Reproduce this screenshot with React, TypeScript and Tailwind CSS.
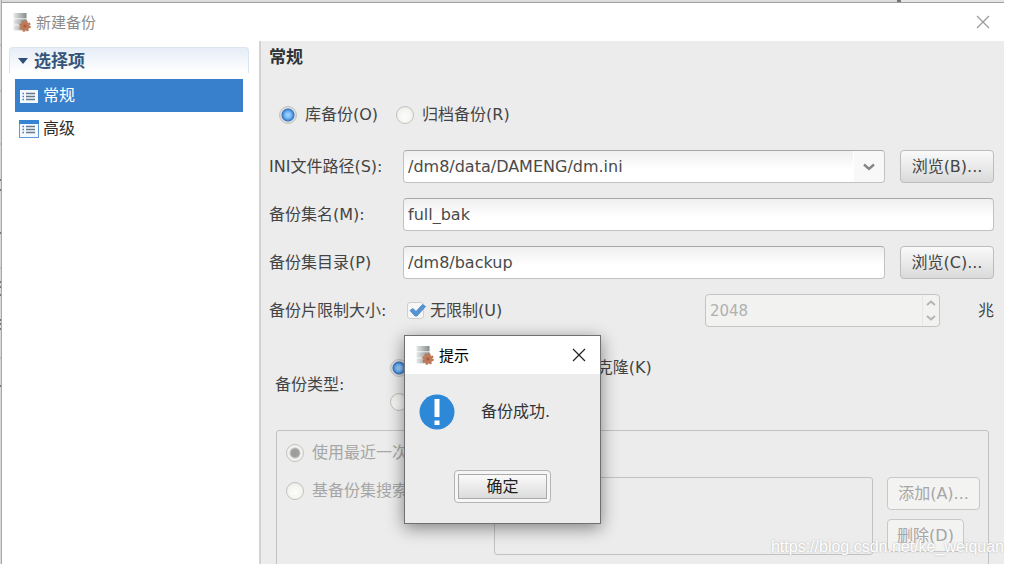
import React from 'react';
import { clsx } from 'clsx';

const FONT = "font-['DejaVu_Sans','Noto_Sans_CJK_SC',sans-serif]";
const UI_FONT = "font-['Noto_Sans_CJK_SC',sans-serif]";

function AppIcon() {
  return (
    <svg viewBox="0 0 20 20" className="h-5 w-5 shrink-0" aria-hidden="true">
      <defs>
        <linearGradient id="server" x1="0" x2="1">
          <stop offset="0" stopColor="#e6e9e8" />
          <stop offset="1" stopColor="#848c8b" />
        </linearGradient>
      </defs>
      <rect x="1.5" y="1" width="13" height="5.4" fill="url(#server)" />
      <rect x="1.5" y="7.2" width="13" height="5.4" fill="url(#server)" />
      <rect x="1.5" y="13.4" width="13" height="5" fill="url(#server)" />
      <circle cx="13" cy="14" r="4.9" fill="none" stroke="#b97350" strokeWidth="1.8" strokeDasharray="2.2 1.6" />
      <circle cx="13" cy="14" r="4.6" fill="#be7a5a" />
      <circle cx="13" cy="14" r="1.6" fill="#a85c40" />
    </svg>
  );
}

function CloseIcon({ className }: { className?: string }) {
  return (
    <svg viewBox="0 0 14 14" className={clsx('h-3.5 w-3.5', className)} aria-hidden="true">
      <path d="M1 1 L13 13 M13 1 L1 13" stroke="currentColor" strokeWidth="1.2" fill="none" />
    </svg>
  );
}

function ListIcon({ active }: { active?: boolean }) {
  return (
    <svg viewBox="0 0 20 18" className="h-[18px] w-5 shrink-0" aria-hidden="true">
      {active ? (
        <rect x="1" y="3" width="18" height="13" fill="#f4f9ff" />
      ) : (
        <>
          <rect x="0.5" y="0.5" width="19" height="17" fill="#f4f9ff" stroke="#5b9bdc" />
          <rect x="0" y="0" width="20" height="4" fill="#3584d4" />
        </>
      )}
      <path d="M3.5 6.5h1.5M3.5 9.5h1.5M3.5 12.5h1.5" stroke="#3f7fc2" strokeWidth="1.4" />
      <path d="M7 6.5h9M7 9.5h9M7 12.5h9" stroke="#66788a" strokeWidth="1.4" />
    </svg>
  );
}

interface RadioProps {
  name: string;
  label: string;
  checked?: boolean;
  disabled?: boolean;
  className?: string;
}

function Radio({ name, label, checked, disabled, className }: RadioProps) {
  return (
    <label className={clsx('flex items-center gap-2 whitespace-nowrap', disabled && 'text-[#a6a6a6]', className)}>
      <input
        type="radio"
        name={name}
        defaultChecked={checked}
        disabled={disabled}
        className="h-[18px] w-[18px] shrink-0 appearance-none rounded-full border border-[#c2c2be] bg-[radial-gradient(circle_at_50%_60%,#fdfdfc_0%,#f3f3f0_60%,#dcdcd8_100%)] enabled:checked:bg-[radial-gradient(circle,#a4d4ff_0px,#7dbcf8_3px,#4a90dc_5px,#3a74b8_6px,#e0e2e4_7px,#d2d4d6_9px)] disabled:checked:bg-[radial-gradient(circle,#9b9b9b_0px,#a0a0a0_4px,#f2f2f0_6px)]"
      />
      {label}
    </label>
  );
}

interface ButtonProps {
  children: React.ReactNode;
  disabled?: boolean;
  className?: string;
}

function Button({ children, disabled, className }: ButtonProps) {
  return (
    <button
      type="button"
      disabled={disabled}
      className={clsx(
        'h-[33px] rounded-[4px] border border-[#bcbcbc] bg-linear-to-b from-[#fafafa] to-[#dadada] px-1.5 whitespace-nowrap disabled:border-[#c8c8c8] disabled:from-[#f3f3f2] disabled:to-[#f3f3f2] disabled:text-[#a6a6a6]',
        className,
      )}
    >
      {children}
    </button>
  );
}

const fieldClass =
  'h-[33px] w-full min-w-0 appearance-none rounded-[4px] border border-[#c2c2c2] border-t-[#a9a9a9] bg-linear-to-b from-[#efefef] to-white to-60% px-1 text-[#4a4a4a] outline-none';

function Sidebar() {
  return (
    <nav className="w-[258px] shrink-0 border-r-2 border-[#d2d2d2] bg-white pt-1.5 pr-2.5 pl-1.5 text-[#2d2d2d]">
      <button
        type="button"
        className="flex h-[26px] w-full items-center gap-1.5 rounded-t-[4px] border border-b-0 border-[#dbe4f0] bg-linear-to-b from-[#e6edf7] to-white px-2 text-[17px] font-bold text-[#35557a]"
      >
        <svg viewBox="0 0 10 6" className="h-1.5 w-2.5" aria-hidden="true">
          <path d="M0 0H10L5 6Z" fill="#2d5078" />
        </svg>
        选择项
      </button>
      <ul className="mx-1.5 mt-1.5">
        <li>
          <a href="#general" className="flex h-[33px] items-center gap-1 bg-[#3980cc] px-1 text-white">
            <ListIcon active />
            常规
          </a>
        </li>
        <li>
          <a href="#advanced" className="flex h-[33px] items-center gap-1 px-1">
            <ListIcon />
            高级
          </a>
        </li>
      </ul>
    </nav>
  );
}

function GeneralForm() {
  return (
    <main className="min-w-0 flex-1 bg-[#ececec] text-[#444]">
      <h1 className="flex h-8 items-center pl-2 text-[17px] font-bold text-[#2e3436]">常规</h1>

      <div className="mt-[26px] flex h-8 items-center gap-[18px] pl-[18px]">
        <Radio name="scope" label="库备份(O)" checked />
        <Radio name="scope" label="归档备份(R)" />
      </div>

      <div className="mt-[19px] grid grid-cols-[134px_1fr_94px] items-center gap-y-[15px] pr-2.5 pl-2">
        <label htmlFor="ini">INI文件路径(S):</label>
        <div className="relative mr-[15px]">
          <select id="ini" className={fieldClass}>
            <option>/dm8/data/DAMENG/dm.ini</option>
          </select>
          <span className="pointer-events-none absolute inset-y-px right-px flex w-[31px] items-center justify-center rounded-r-[4px] border-l border-white bg-[#f8f8f8]">
            <svg viewBox="0 0 12 8" className="h-2 w-3" aria-hidden="true">
              <path d="M1 1.5L6 6L11 1.5" fill="none" stroke="#858585" strokeWidth="2.4" />
            </svg>
          </span>
        </div>
        <Button>浏览(B)...</Button>

        <label htmlFor="set-name">备份集名(M):</label>
        <div className="col-span-2">
          <input id="set-name" type="text" defaultValue="full_bak" className={fieldClass} />
        </div>

        <label htmlFor="set-dir">备份集目录(P)</label>
        <div className="mr-[15px]">
          <input id="set-dir" type="text" defaultValue="/dm8/backup" className={fieldClass} />
        </div>
        <Button>浏览(C)...</Button>

        <label htmlFor="piece-size">备份片限制大小:</label>
        <div className="col-span-2 flex items-center">
          <label className="flex items-center gap-1.5 pl-1">
            <span className="relative flex">
              <input
                type="checkbox"
                defaultChecked
                className="h-[17px] w-[17px] appearance-none rounded-[3px] border border-[#cdcfd1] bg-[#f6f6f6]"
              />
              <svg viewBox="0 0 20 18" className="pointer-events-none absolute inset-0 h-[18px] w-5" aria-hidden="true">
                <path d="M3 8.5L6 6.5L9 9.5L15.5 2.5L18.5 4.5L10 14H8Z" fill="#5594d6" stroke="#4480bd" strokeWidth="0.8" />
              </svg>
            </span>
            无限制(U)
          </label>
          <div className="mr-[38px] ml-auto flex h-[33px] w-[235px] rounded-[4px] border border-[#c4c4c4] bg-[#f2f2f1]">
            <input
              id="piece-size"
              type="text"
              defaultValue="2048"
              disabled
              className="min-w-0 flex-1 bg-transparent px-1 text-[15px] text-[#b0b0b0]"
            />
            <span className="flex w-[17px] flex-col items-center justify-around border-l border-[#e6e6e6]">
              <svg viewBox="0 0 10 6" className="h-1.5 w-2.5" aria-hidden="true">
                <path d="M1 5L5 1.5L9 5" fill="none" stroke="#b4b4b4" strokeWidth="2" />
              </svg>
              <svg viewBox="0 0 10 6" className="h-1.5 w-2.5" aria-hidden="true">
                <path d="M1 1L5 4.5L9 1" fill="none" stroke="#b4b4b4" strokeWidth="2" />
              </svg>
            </span>
          </div>
          <span>兆</span>
        </div>
      </div>

      <div className="mt-6 flex h-[68px] items-center pl-3.5">
        <span className="w-[115px]">备份类型:</span>
        <div className="flex flex-col">
          <div className="flex h-[34px] items-center gap-[69px]">
            <Radio name="type" label="完全备份(F)" checked />
            <Radio name="type" label="克隆(K)" />
          </div>
          <div className="flex h-[34px] items-center gap-[18px]">
            <Radio name="type" label="增量备份(I)" />
            <Radio name="type" label="累积(A)" />
          </div>
        </div>
      </div>

      <fieldset className="mx-[15px] mt-[11px] h-[180px] rounded-t-[3px] border border-[#c2c2c2] pr-2 pl-[9px]">
        <Radio name="base" label="使用最近一次" checked disabled className="h-11" />
        <div className="grid grid-cols-[208px_1fr_93px] items-start">
          <Radio name="base" label="基备份集搜索" disabled className="h-8" />
          <div className="mt-0.5 mr-3.5 h-[78px] rounded-[3px] border border-[#c2c2c2]" />
          <div className="mt-0.5 flex flex-col items-start gap-[9px]">
            <Button disabled className="w-full">添加(A)...</Button>
            <Button disabled className="w-[77px]">删除(D)</Button>
          </div>
        </div>
      </fieldset>
    </main>
  );
}

function MessageDialog() {
  return (
    <div
      role="dialog"
      aria-labelledby="message-title"
      className="absolute top-[335px] left-[404px] w-[197px] border border-[#707070] bg-[#ececec] shadow-[0_4px_16px_rgba(0,0,0,0.45)]"
    >
      <div className={clsx('flex h-[38px] items-center gap-1 bg-white px-2.5 text-[15px] text-black', UI_FONT)}>
        <AppIcon />
        <h2 id="message-title">提示</h2>
        <button type="button" aria-label="关闭" className="mr-1 ml-auto text-[#222]">
          <CloseIcon />
        </button>
      </div>
      <div className="flex items-center gap-[26px] px-3.5 pt-5 text-[#333]">
        <svg viewBox="0 0 36 36" className="h-9 w-9" aria-hidden="true">
          <circle cx="18" cy="18" r="17.5" fill="#2e88d8" />
          <path d="M15.5 5H20.5V23H15.5Z M15.5 26.5H20.5V31H15.5Z" fill="#fff" />
        </svg>
        <p>备份成功.</p>
      </div>
      <div className="flex justify-center pt-10 pb-5">
        <button type="button" className="h-[33px] w-[97px] rounded-[4px] border border-[#b5b5b5] bg-[#f6f6f6] p-[3px] text-[#222]">
          <span className="flex h-full items-center justify-center border border-[#a9a9a9] bg-linear-to-b from-[#fafafa] to-[#dcdcdc]">
            确定
          </span>
        </button>
      </div>
    </div>
  );
}

export default function App() {
  return (
    <div className={clsx('relative flex h-screen overflow-hidden bg-white pr-2 pb-px text-[16px] leading-6', FONT)}>
      {/* edge of the window lying behind this one */}
      <svg className="h-full w-px shrink-0 bg-[#d9d9d9]" aria-hidden="true">
        <path d="M0 45h2M0 91h2M0 144h2M0 268h2M0 358h2" stroke="#aaa" />
        <path d="M0 180h2M0 190h2M0 233h2M0 282h2M0 287h2M0 295h2M0 320h2M0 324h2M0 329h2M0 386h2" stroke="#777" strokeWidth="2" />
      </svg>
      <div className="flex min-w-0 flex-1 flex-col border-l border-[#a8a8a8]">
        <div className="flex h-[3px] shrink-0 justify-end border-b border-[#a0a0a0] bg-[#dcdcdc]">
          <span className="w-[107px] border-l-4 border-[#777] bg-[#e6e6e6]" />
        </div>
        <header className={clsx('flex h-[38px] shrink-0 items-center gap-1 bg-white pr-3.5 pl-2.5 text-[15px] text-[#8c8c8c]', UI_FONT)}>
          <AppIcon />
          <span>新建备份</span>
          <button type="button" aria-label="关闭" className="ml-auto text-[#999]">
            <CloseIcon />
          </button>
        </header>
        <div className="flex min-h-0 flex-1 overflow-hidden pl-px">
          <Sidebar />
          <GeneralForm />
        </div>
      </div>
      <MessageDialog />
      <span className="absolute right-2 bottom-1.5 font-['Liberation_Sans',sans-serif] text-[16px] text-white [text-shadow:0_0_2px_#aaa]">
        https://blog.csdn.net/ke_weiquan
      </span>
    </div>
  );
}
